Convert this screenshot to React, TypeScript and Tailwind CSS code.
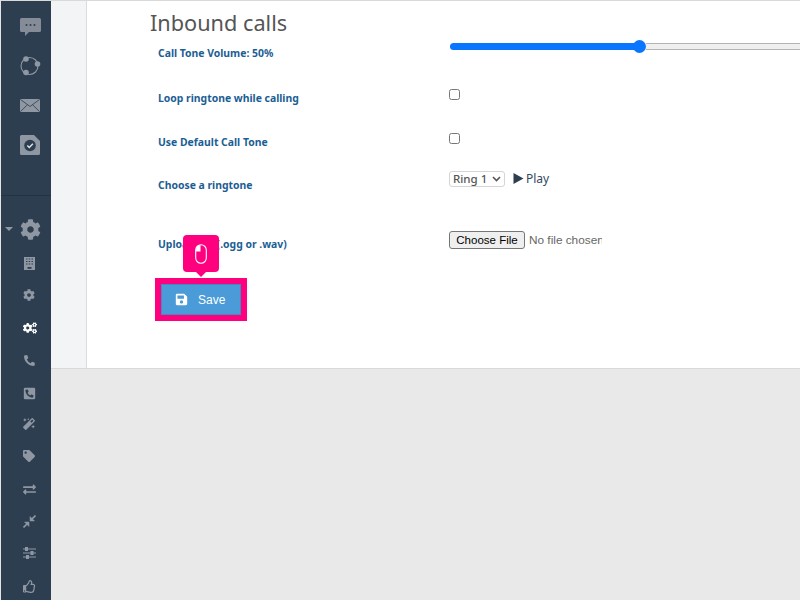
import type { ReactNode } from 'react';
import {
  FaCog,
  FaCogs,
  FaExchangeAlt,
  FaMagic,
  FaPhoneAlt,
  FaPhoneSquareAlt,
  FaRegThumbsUp,
  FaSave,
  FaTag,
} from 'react-icons/fa';

const labelFont = { fontFamily: '"Noto Sans", sans-serif' };
const uiFont = { fontFamily: '"Liberation Sans", sans-serif' };

function ChatIcon() {
  return (
    <svg width="21" height="18" viewBox="0 0 21 18">
      <path d="M1.500 0h18A1.500 1.500 0 0 1 21 1.500v11a1.500 1.500 0 0 1-1.500 1.500H9l-4 4v-4H1.500A1.500 1.500 0 0 1 0 12.500v-11A1.500 1.500 0 0 1 1.500 0z" fill="#858c97" />
      <circle cx="6.500" cy="7" r="1" fill="#2c3e50" />
      <circle cx="10.500" cy="7" r="1" fill="#2c3e50" />
      <circle cx="14.500" cy="7" r="1" fill="#2c3e50" />
    </svg>
  );
}

function NetworkIcon() {
  return (
    <svg width="22" height="20" viewBox="0 0 22 20" fill="none">
      <circle cx="10.500" cy="10" r="8.500" stroke="#8f97a3" strokeWidth="1.100" />
      <circle cx="7" cy="3" r="2.800" fill="#8f97a3" />
      <circle cx="18.500" cy="8" r="2.800" fill="#8f97a3" />
      <circle cx="7" cy="16.500" r="2.800" fill="#8f97a3" />
    </svg>
  );
}

function MailIcon() {
  return (
    <svg width="20" height="13" viewBox="0 0 20 13">
      <rect width="20" height="13" rx="1" fill="#8f97a3" />
      <path d="M0.500 0.500L10 7.500L19.500 0.500M0.500 12.500L7.500 5.700M19.500 12.500L12.500 5.700" fill="none" stroke="#2c3e50" strokeWidth="0.800" />
    </svg>
  );
}

function TaskIcon() {
  return (
    <svg width="20" height="20" viewBox="0 0 20 20">
      <path d="M1.500 0H14l6 6v12.500a1.500 1.500 0 0 1-1.500 1.500H1.500A1.500 1.500 0 0 1 0 18.500V1.500A1.500 1.500 0 0 1 1.500 0z" fill="#8f97a3" />
      <circle cx="10" cy="10.500" r="5.800" fill="#2c3e50" />
      <path d="M7.300 10.500l2 2 3.600-3.800" fill="none" stroke="#dfe2e6" strokeWidth="1.500" />
    </svg>
  );
}

function BuildingIcon() {
  return (
    <svg width="11" height="13" viewBox="0 0 11 13">
      <rect width="11" height="13" fill="#8f97a3" />
      <path d="M2 2h1.500M4.700 2h1.500M7.500 2H9M2 4.500h1.500M4.700 4.500h1.500M7.500 4.500H9M2 7h1.500M4.700 7h1.500M7.500 7H9" stroke="#2c3e50" strokeWidth="1.200" />
      <rect x="3.500" y="10" width="4" height="1.800" fill="#2c3e50" />
    </svg>
  );
}

function CompressIcon() {
  return (
    <svg width="13" height="13" viewBox="0 0 13 13" fill="none" stroke="#8f97a3">
      <path d="M12.500 0.500L8.500 4.500M0.500 12.500L4.500 8.500" strokeWidth="1.600" />
      <path d="M7 1.500V6H11.500z" fill="#8f97a3" strokeWidth="0.500" />
      <path d="M1.500 7H6V11.500z" fill="#8f97a3" strokeWidth="0.500" />
    </svg>
  );
}

function SlidersIcon() {
  return (
    <svg width="13" height="12" viewBox="0 0 13 12" fill="none" stroke="#8f97a3" strokeWidth="1">
      <path d="M0 2h13M0 6h13M0 10h13" />
      <rect x="2.500" y="0.500" width="2" height="3" fill="#8f97a3" />
      <rect x="8" y="4.500" width="2" height="3" fill="#8f97a3" />
      <rect x="3.500" y="8.500" width="2" height="3" fill="#8f97a3" />
    </svg>
  );
}

function MouseIcon() {
  return (
    <svg width="12" height="20" viewBox="0 0 12 20" fill="none">
      <rect x="0.700" y="0.700" width="10.600" height="18.600" rx="5.300" stroke="#fff" strokeWidth="1.100" />
      <path d="M1 6V5.500A4.800 4.800 0 0 1 5.500 1V7.500H1z" fill="#fff" />
    </svg>
  );
}

function NavIcon({ children, className }: { children: ReactNode; className: string }) {
  return <div className={`flex items-center justify-center text-[#8f97a3] ${className}`}>{children}</div>;
}

function Sidebar() {
  return (
    <div className="w-[50px] shrink-0 bg-[#2c3e50] flex flex-col items-center">
      <div className="w-full h-[195px] border-b border-[#243342] flex flex-col items-center pt-[14px]">
        <NavIcon className="h-[24px] w-[24px] ml-[8px]"><ChatIcon /></NavIcon>
        <NavIcon className="h-[24px] w-[24px] ml-[8px] mt-[15px]"><NetworkIcon /></NavIcon>
        <NavIcon className="h-[24px] w-[24px] ml-[8px] mt-[15px]"><MailIcon /></NavIcon>
        <NavIcon className="h-[24px] w-[24px] ml-[8px] mt-[16px]"><TaskIcon /></NavIcon>
      </div>
      <div className="w-full flex flex-col items-center pt-[21px]">
        <div className="flex items-center w-full h-[24px] pl-[4px]">
          <div className="w-0 h-0 border-x-[4px] border-x-transparent border-t-[4px] border-t-[#8f97a3] mr-[7px]" />
          <FaCog size={21} className="text-[#8f97a3]" />
        </div>
        <NavIcon className="h-[14px] w-[14px] ml-[6px] mt-[15px]"><BuildingIcon /></NavIcon>
        <NavIcon className="h-[14px] w-[14px] ml-[6px] mt-[18px]"><FaCog size={12} /></NavIcon>
        <NavIcon className="h-[14px] w-[14px] ml-[8px] mt-[19px] !text-white"><FaCogs size={14} /></NavIcon>
        <NavIcon className="h-[14px] w-[14px] ml-[6px] mt-[18px]"><FaPhoneAlt size={11} /></NavIcon>
        <NavIcon className="h-[14px] w-[14px] ml-[6px] mt-[19px]"><FaPhoneSquareAlt size={13} /></NavIcon>
        <NavIcon className="h-[14px] w-[14px] ml-[6px] mt-[17px]"><FaMagic size={12} /></NavIcon>
        <NavIcon className="h-[14px] w-[14px] ml-[6px] mt-[18px]"><FaTag size={12} /></NavIcon>
        <NavIcon className="h-[14px] w-[14px] ml-[7px] mt-[19px]"><FaExchangeAlt size={13} /></NavIcon>
        <NavIcon className="h-[14px] w-[14px] ml-[6px] mt-[18px]"><CompressIcon /></NavIcon>
        <NavIcon className="h-[14px] w-[14px] ml-[6px] mt-[18px]"><SlidersIcon /></NavIcon>
        <NavIcon className="h-[14px] w-[14px] ml-[6px] mt-[19px]"><FaRegThumbsUp size={13} /></NavIcon>
      </div>
    </div>
  );
}

function Row({ label, height, children }: { label: ReactNode; height: string; children: ReactNode }) {
  return (
    <div className={`flex ${height}`}>
      <div style={labelFont} className="w-[291px] pt-[1px] text-[10.4px] leading-[15px] font-bold text-[#1b5e94]">{label}</div>
      <div className="flex-1 min-w-0">{children}</div>
    </div>
  );
}

export default function App() {
  return (
    <div className="w-[800px] h-[600px] overflow-hidden bg-[#e9e9e9] flex border-t border-[#d9d9d9] border-l-1 border-l-[#e4e4e4]">
      <Sidebar />
      <div className="flex-1 min-w-0 flex flex-col">
        <div className="h-[368px] flex border-b border-[#d9d9d9]">
          <div className="w-[36px] bg-[#f3f4f6] border-r border-[#dcdcdc] shrink-0" />
          <div className="flex-1 min-w-0 bg-white pl-[63px]">
            <h1 style={labelFont} className="text-[21.7px] leading-[27px] pt-[8px] box-content text-[#555]">Inbound calls</h1>
            <div className="pl-[8px] pt-[9px]">
              <Row label="Call Tone Volume: 50%" height="h-[45px]">
                <div className="flex items-center h-[11px] mt-[-4px] ml-[1px] w-[400px]">
                  <div className="w-[190px] h-[7px] rounded-l-full bg-[#0a75ff]" />
                  <div className="w-[13px] h-[13px] rounded-full bg-[#0a75ff] ml-[-7px] shrink-0" />
                  <div className="flex-1 h-[7px] bg-[#efefef] border-y border-[#b5b5b5]" />
                </div>
              </Row>
              <Row label="Loop ringtone while calling" height="h-[44px]">
                <input type="checkbox" className="block" style={{ margin: '-1px 0 0 0', width: 11, height: 11 }} />
              </Row>
              <Row label="Use Default Call Tone" height="h-[43px]">
                <input type="checkbox" className="block" style={{ margin: '-1px 0 0 0', width: 11, height: 11 }} />
              </Row>
              <Row label="Choose a ringtone" height="h-[59px]">
                <div className="flex items-center mt-[-7px] h-[17px]">
                  <div className="relative w-[56px] h-[16px]">
                    <select style={labelFont} className="block appearance-none w-full h-full pl-[3px] text-[11.5px] font-medium leading-[14px] text-[#555] border border-[#d5d5d5] rounded-[3px] bg-white">
                      <option>Ring 1</option>
                    </select>
                    <svg className="absolute right-[4px] top-[5px]" width="9" height="6" viewBox="0 0 9 6" fill="none"><path d="M1 1l3.500 3.500L8 1" stroke="#555" strokeWidth="1.600" /></svg>
                  </div>
                  <div className="flex items-center ml-[8px] text-[#34495e]">
                    <svg width="11" height="11" viewBox="0 0 11 11"><path d="M0.500 0L10.500 5.500L0.500 11z" fill="#2c3e50" /></svg>
                    <span style={labelFont} className="ml-[2px] text-[12px] leading-[16px]">Play</span>
                  </div>
                </div>
              </Row>
              <Row label="Upload file (.ogg or .wav)" height="h-[41px]">
                <div className="w-[153px] mt-[-5px] overflow-hidden">
                  <input type="file" style={uiFont} className="block w-[260px] text-[11.8px] text-[#666] file:mr-[4px] file:h-[18px] file:w-[76px] file:text-[11.500px] file:text-black file:bg-[#efefef] file:border file:border-[#767676] file:rounded-[3px]" />
                </div>
              </Row>
              <div className="relative w-[92px] h-[43px] ml-[-3px] mt-[1px] border-[6px] border-[#ff007f] flex">
                <button style={uiFont} className="w-full h-full bg-[#4a9bd8] border border-[#3f8bc4] text-white text-[12px] flex items-center pl-[13px]">
                  <FaSave size={13} />
                  <span className="ml-[10px]">Save</span>
                </button>
                <div className="absolute left-[22px] top-[-49px] w-[36px] h-[37px] rounded-[4px] bg-[#ff007f] flex items-center justify-center">
                  <MouseIcon />
                  <div className="absolute bottom-[-5px] left-[13px] w-0 h-0 border-x-[5px] border-x-transparent border-t-[5px] border-t-[#ff007f]" />
                </div>
              </div>
            </div>
          </div>
        </div>
      </div>
    </div>
  );
}
